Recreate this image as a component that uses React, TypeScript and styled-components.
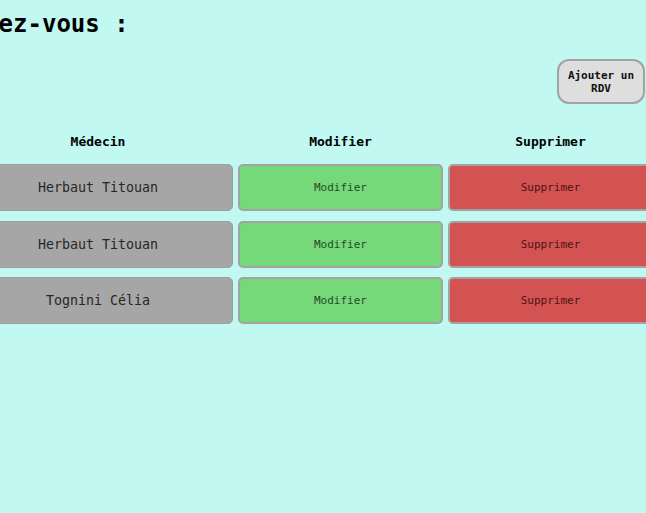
import React from "react";
import styled, { createGlobalStyle } from "styled-components";

const Global = createGlobalStyle`
  html, body {
    margin: 0;
    padding: 0;
    background: #c1f8f2;
    overflow: hidden;
  }
  body {
    font-family: "DejaVu Sans Mono", "Liberation Mono", monospace;
    color: #000;
  }
`;

const Page = styled.main`
  width: 770px;
  margin-left: -117px;
  padding-top: 10px;
`;

const Title = styled.h2`
  margin: 0;
  font-size: 24px;
  line-height: 28px;
  font-weight: bold;
  white-space: nowrap;
`;

const Toolbar = styled.div`
  display: flex;
  justify-content: flex-end;
  margin-top: 21px;
  padding-right: 8px;
`;

const AddButton = styled.button`
  font-family: "DejaVu Sans Mono", "Liberation Mono", monospace;
  font-size: 11px;
  font-weight: bold;
  line-height: 13px;
  width: 88px;
  height: 45px;
  padding: 7px 6px;
  background: #dedede;
  color: #111;
  border: 2px solid #a2a2a2;
  border-radius: 12px;
  text-align: center;
`;

const Table = styled.div`
  display: grid;
  grid-template-columns: 270px 205px 205px;
  column-gap: 5px;
  row-gap: 9.5px;
  margin-left: 80px;
  margin-top: 29.5px;
`;

const HeadCell = styled.div`
  font-size: 13px;
  font-weight: bold;
  line-height: 15px;
  text-align: center;
  padding-bottom: 6px;
`;

const NameCell = styled.div`
  height: 47px;
  box-sizing: border-box;
  display: flex;
  align-items: center;
  justify-content: center;
  background: #a6a6a6;
  border: 1px solid #9e9e9e;
  border-radius: 5px;
  font-size: 13.3px;
  color: #262626;
`;

const ActionButton = styled.button<{ $tone: "edit" | "delete" }>`
  height: 47px;
  box-sizing: border-box;
  width: 100%;
  margin: 0;
  background: ${(p) => (p.$tone === "edit" ? "#75d97a" : "#d35252")};
  border: 2px solid #a3a3a3;
  border-radius: 5px;
  font-family: "DejaVu Sans Mono", "Liberation Mono", monospace;
  font-size: 11px;
  color: ${(p) => (p.$tone === "edit" ? "#27492a" : "#4f1414")};
  cursor: pointer;
`;

const rdvs = [
  { id: 1, medecin: "Herbaut Titouan" },
  { id: 2, medecin: "Herbaut Titouan" },
  { id: 3, medecin: "Tognini Célia" },
];

export default function App() {
  return (
    <>
      <Global />
      <Page>
        <Title>Vos rendez-vous :</Title>
        <Toolbar>
          <AddButton>Ajouter un RDV</AddButton>
        </Toolbar>
        <Table>
          <HeadCell>Médecin</HeadCell>
          <HeadCell>Modifier</HeadCell>
          <HeadCell>Supprimer</HeadCell>
          {rdvs.map((r) => (
            <React.Fragment key={r.id}>
              <NameCell>{r.medecin}</NameCell>
              <ActionButton $tone="edit">Modifier</ActionButton>
              <ActionButton $tone="delete">Supprimer</ActionButton>
            </React.Fragment>
          ))}
        </Table>
      </Page>
    </>
  );
}
